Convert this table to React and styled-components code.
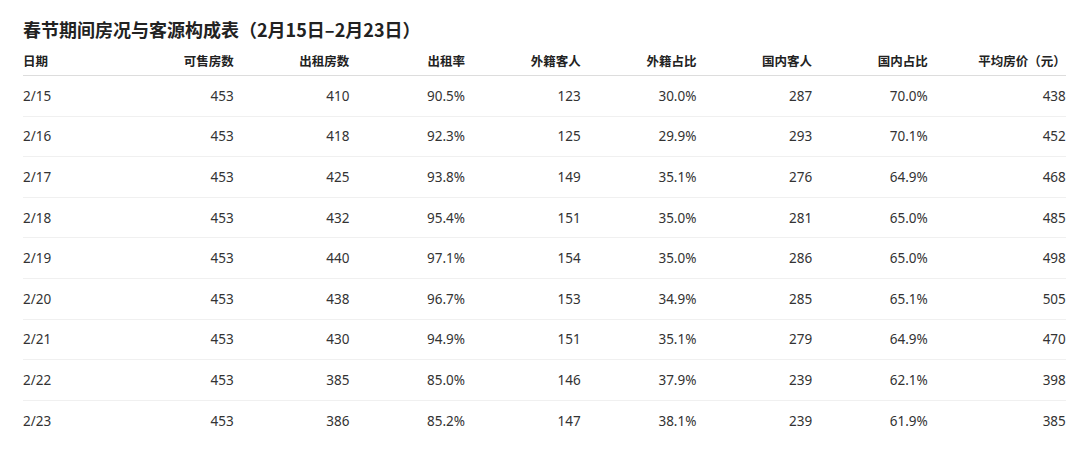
import React from 'react';
import styled, { createGlobalStyle } from 'styled-components';

const columns = ['日期', '可售房数', '出租房数', '出租率', '外籍客人', '外籍占比', '国内客人', '国内占比', '平均房价（元）'];
const widths = [95, 115.7, 115.7, 115.7, 115.7, 115.7, 115.7, 115.7, 138];

const rows = [
  ['2/15', 453, 410, '90.5%', 123, '30.0%', 287, '70.0%', 438],
  ['2/16', 453, 418, '92.3%', 125, '29.9%', 293, '70.1%', 452],
  ['2/17', 453, 425, '93.8%', 149, '35.1%', 276, '64.9%', 468],
  ['2/18', 453, 432, '95.4%', 151, '35.0%', 281, '65.0%', 485],
  ['2/19', 453, 440, '97.1%', 154, '35.0%', 286, '65.0%', 498],
  ['2/20', 453, 438, '96.7%', 153, '34.9%', 285, '65.1%', 505],
  ['2/21', 453, 430, '94.9%', 151, '35.1%', 279, '64.9%', 470],
  ['2/22', 453, 385, '85.0%', 146, '37.9%', 239, '62.1%', 398],
  ['2/23', 453, 386, '85.2%', 147, '38.1%', 239, '61.9%', 385],
];

const App = () => {
  return (
    <Page>
      <GlobalStyle />
      <Title>春节期间房况与客源构成表（2月15日–2月23日）</Title>
      <Table>
        <colgroup>
          {widths.map((w, i) => (
            <col key={i} style={{ width: w }} />
          ))}
        </colgroup>
        <thead>
          <tr>
            {columns.map((c, i) => (
              <HeadCell key={c} $left={i === 0}>{c}</HeadCell>
            ))}
          </tr>
        </thead>
        <tbody>
          {rows.map((r) => (
            <Row key={r[0]}>
              {r.map((v, i) => (
                <Cell key={i} $left={i === 0}>{v}</Cell>
              ))}
            </Row>
          ))}
        </tbody>
      </Table>
    </Page>
  );
};

export default App;

const GlobalStyle = createGlobalStyle`
  body {
    margin: 0;
    background: #fff;
    font-family: "Noto Sans", "Noto Sans CJK SC", sans-serif;
    color: #333;
  }
`;

const Page = styled.div`
  padding: 15px 15px 0 23px;
  width: 1042px;
`;

const Title = styled.h2`
  margin: 0;
  font-family: "Noto Sans CJK SC", sans-serif;
  font-size: 18px;
  font-weight: 700;
  line-height: 28px;
  color: #222;
`;

const Table = styled.table`
  width: 1042px;
  border-collapse: collapse;
  table-layout: fixed;
`;

const HeadCell = styled.th`
  padding: 7px 0 3px;
  height: 22px;
  line-height: 22px;
  font-family: "Noto Sans CJK SC", sans-serif;
  font-size: 12.5px;
  font-weight: 700;
  color: #222;
  text-align: ${(p) => (p.$left ? 'left' : 'right')};
  border-bottom: 1px solid #ddd;
  white-space: nowrap;
`;

const Row = styled.tr`
  border-bottom: 1px solid #f0f0f0;

  &:last-child {
    border-bottom: none;
  }
`;

const Cell = styled.td`
  padding: 0;
  height: 39.6px;
  font-size: 13.5px;
  color: #333;
  text-align: ${(p) => (p.$left ? 'left' : 'right')};
  vertical-align: middle;
`;
